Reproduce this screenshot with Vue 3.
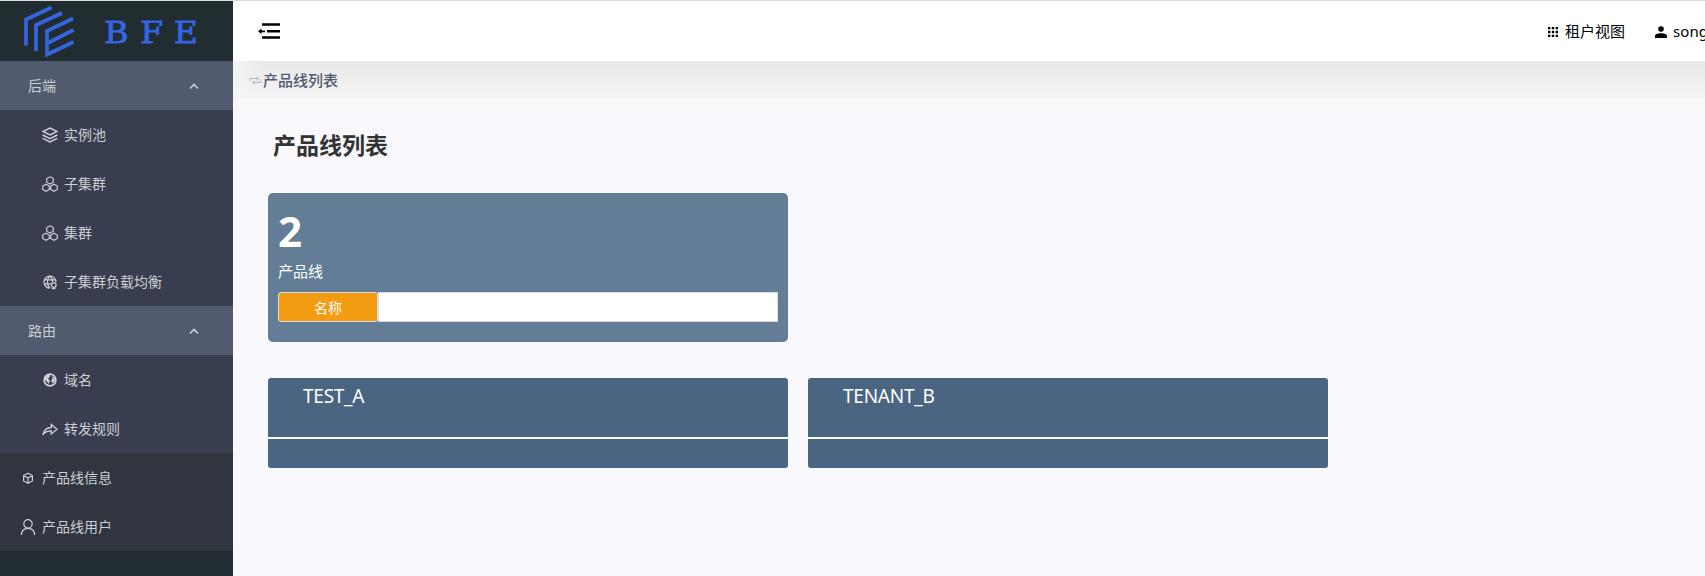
<script setup>
const backend = [
  { label: '实例池', icon: 'layers' },
  { label: '子集群', icon: 'cluster' },
  { label: '集群', icon: 'cluster' },
  { label: '子集群负载均衡', icon: 'globe' },
]
const routes = [
  { label: '域名', icon: 'earth' },
  { label: '转发规则', icon: 'share' },
]
const groups = [
  { title: '后端', items: backend },
  { title: '路由', items: routes },
]
const products = ['TEST_A', 'TENANT_B']
</script>

<template>
  <div class="page">
    <aside class="sidebar">
      <div class="logo">
        <svg width="233" height="60" viewBox="0 1 233 60">
          <g fill="none" stroke="#3565e0" stroke-width="3.7" stroke-linejoin="miter">
            <path d="M26 45.500V19.500L51.500 7.500" />
            <path d="M36 51V25L62 13" />
            <path d="M73 18.500L47 31V54.500L73.500 42" />
            <path d="M48 43L73.500 30" />
          </g>
          <text class="brand" transform="scale(1.14 1)" y="43.500" x="91.500 123 152.500">BFE</text>
        </svg>
      </div>
      <nav>
        <template v-for="g in groups" :key="g.title">
          <div class="group-title">
            <span>{{ g.title }}</span>
            <svg class="chevron" width="10" height="7" viewBox="0 0 10 7"><path d="M1 5.500L5 1.500L9 5.500" fill="none" stroke="currentColor" stroke-width="1.600" /></svg>
          </div>
          <div v-for="it in g.items" :key="it.label" class="item">
            <svg class="icon" width="16" height="16" viewBox="0 0 16 16" fill="none" stroke="currentColor">
              <g v-if="it.icon === 'layers'" stroke-width="1.500">
                <path d="M8 1L15 4.500L8 8L1 4.500Z" />
                <path d="M.7 8L8 11.600L15.300 8M.7 11.300L8 15L15.300 11.300" />
              </g>
              <g v-else-if="it.icon === 'cluster'" stroke-width="1.200">
                <path d="M8 .8L11.300 2.500V6.200L8 8L4.700 6.200V2.500Z" />
                <path d="M4 8.200L7.300 10V13.500L4 15.300L.7 13.500V10Z" />
                <path d="M12 8.200L15.300 10V13.500L12 15.300L8.700 13.500V10Z" />
              </g>
              <g v-else-if="it.icon === 'globe'" stroke-width="1.200">
                <path d="M14 8A6 6 0 1 0 8 14.200M8 2C4.500 5 4.500 11 8 14M8 2C10 4 10.700 6 10.600 8M2.500 5.800H13.500M2 9.800H9" />
                <circle cx="11.800" cy="11" r="2.300" />
                <path d="M11.800 13.300V15M10 14.600H13.500" />
              </g>
              <g v-else-if="it.icon === 'earth'">
                <circle cx="8" cy="8" r="5.900" stroke-width="1.700" />
                <path d="M3 5L6 2.500H8.500L8 4.500L6 6.500L7.800 8.500L7 12L5.200 10L3 8ZM10 4.500L12.500 5.500L13 9L10.500 11.500L9 8.500L10.500 7Z" fill="currentColor" stroke="none" />
              </g>
              <path v-else d="M.8 13.800C2 9 5 6.700 9.300 6.500V3.400L15 8.200L9.300 12.900V9.900C5.800 9.800 3 11 .8 13.800Z" stroke-width="1.300" />
            </svg>
            <span>{{ it.label }}</span>
          </div>
        </template>
        <div class="item root">
          <svg class="icon" width="16" height="16" viewBox="0 0 16 16" fill="none" stroke="currentColor" stroke-width="1.200">
            <path d="M8 3.200L12.400 5.500V11L8 13.400L3.600 11V5.500ZM3.600 5.500L8 8L12.400 5.500M8 8V13.400" />
          </svg>
          <span>产品线信息</span>
        </div>
        <div class="item root">
          <svg class="icon" width="16" height="16" viewBox="0 0 16 16" fill="none" stroke="currentColor" stroke-width="1.200">
            <circle cx="8" cy="4.800" r="4.200" />
            <path d="M1.300 16C1.600 11.700 4 9.400 8 9.400S14.400 11.700 14.700 16" />
          </svg>
          <span>产品线用户</span>
        </div>
      </nav>
    </aside>

    <div class="body">
      <header class="header">
        <svg width="22" height="17" viewBox="0 0 22 17">
          <path d="M4 1.500H22M9 8.300H22M4 14.500H22" stroke="#000" stroke-width="2.600" />
          <path d="M0 8.300L3.500 5.500V7.400H7V9.200H3.500V11.100Z" />
        </svg>
        <div class="user-bar">
          <svg class="grid-icon" width="10" height="10" viewBox="0 0 10 10">
            <path d="M0 1.200H10M0 5H10M0 8.800H10" stroke="#000" stroke-width="2.300" stroke-dasharray="2.400 1.400" />
          </svg>
          <span class="tenant">租户视图</span>
          <svg class="user-icon" width="12" height="12" viewBox="0 0 12 12">
            <circle cx="6" cy="3" r="2.800" />
            <path d="M0 12V10C0 8 3 7.200 6 7.200S12 8 12 10V12Z" />
          </svg>
          <span class="user-name">song</span>
        </div>
      </header>
      <div class="crumb">
        <svg width="13" height="9" viewBox="0 0 13 9" fill="none" stroke="#b4b7bd" stroke-width="1">
          <path d="M1 5V2.500H9M7.500 .8L9.500 2.500L7.500 4.200M12 3.500V6.500H4M5.500 4.800L3.500 6.500L5.500 8.200" />
        </svg>
        <span>产品线列表</span>
      </div>
      <main class="content">
        <h1>产品线列表</h1>
        <section class="summary">
          <div class="count">2</div>
          <div class="caption">产品线</div>
          <div class="search">
            <span class="search-label">名称</span>
            <input class="search-input" type="text" />
          </div>
        </section>
        <div class="cards">
          <div v-for="p in products" :key="p" class="card">
            <div class="card-name">{{ p }}</div>
            <div class="card-foot"></div>
          </div>
        </div>
      </main>
    </div>
  </div>
</template>

<style>
body {
  overflow: hidden;
}
</style>

<style scoped>
.page {
  display: flex;
  width: 100%;
  height: 576px;
  box-sizing: border-box;
  border-top: 1px solid #d9dade;
  overflow: hidden;
  background: #f8f8fd;
  font-family: "Noto Sans", "Noto Sans CJK SC", sans-serif;
  font-size: 14px;
}
.sidebar {
  width: 233px;
  flex: none;
  background: #222d32;
  color: #cdcfd3;
}
.logo {
  height: 60px;
}
.logo svg {
  display: block;
}
.brand {
  font-family: "DejaVu Serif", serif;
  font-size: 29px;
  fill: #3565e0;
  stroke: #3565e0;
  stroke-width: 0.8px;
}
.group-title {
  height: 49px;
  display: flex;
  align-items: center;
  justify-content: space-between;
  box-sizing: border-box;
  padding: 0 34px 2px 28px;
  background: #515a6e;
}
.chevron {
  margin-top: 4px;
}
.item {
  height: 49px;
  display: flex;
  align-items: center;
  gap: 6px;
  box-sizing: border-box;
  padding: 0 0 2px 42px;
  background: #383e4f;
}
.item .icon {
  margin-top: 3px;
}
.root {
  padding-left: 20px;
  background: #31353f;
}
.body {
  flex: 1;
  min-width: 0;
}
.header {
  height: 60px;
  display: flex;
  align-items: center;
  justify-content: space-between;
  background: #fff;
  padding-left: 25px;
  font-size: 15px;
  color: #000;
}
.user-bar {
  width: 157px;
  display: flex;
  align-items: center;
  padding-bottom: 1px;
  box-sizing: border-box;
  white-space: nowrap;
}
.user-bar svg {
  flex: none;
}
.grid-icon {
  margin: 3px 7px 0 0;
}
.tenant {
  margin-right: 30px;
}
.user-icon {
  margin: 3px 6px 0 0;
}
.user-name {
  letter-spacing: 0.1px;
}
.crumb {
  height: 38px;
  display: flex;
  align-items: center;
  box-sizing: border-box;
  padding: 0 0 2px 16px;
  background: linear-gradient(90deg, rgba(245, 245, 245, .8), rgba(245, 245, 245, 0) 30px), linear-gradient(#e9e9e9, #f4f4f4);
  font-size: 15px;
  font-weight: 500;
  color: #515a6e;
}
.crumb svg {
  margin: 3px 1px 0 0;
}
.content {
  padding: 28px 35px 0;
}
h1 {
  margin: 0 0 0 5px;
  height: 66px;
  font-size: 23px;
  line-height: 36px;
  font-weight: 700;
  color: #333;
}
.summary {
  width: 520px;
  height: 149px;
  box-sizing: border-box;
  padding: 10px;
  border-radius: 5px;
  background: #637d96;
  color: #fff;
}
.count {
  height: 55px;
  font-size: 42px;
  line-height: 55px;
  font-weight: 700;
}
.caption {
  height: 34px;
  font-size: 15px;
  line-height: 26px;
}
.search {
  display: flex;
  height: 30px;
}
.search-label {
  width: 100px;
  box-sizing: border-box;
  border: 1px solid #dcdee2;
  border-radius: 3px;
  background: #f39c12;
  line-height: 30px;
  text-align: center;
}
.search-input {
  flex: 1;
  min-width: 0;
  padding: 0 8px;
  border: 1px solid #d9dce3;
  background: #fff;
  outline: none;
}
.cards {
  display: flex;
  gap: 20px;
  margin-top: 36px;
}
.card {
  width: 520px;
  height: 90px;
  border-radius: 3px;
  overflow: hidden;
  background: #4a6582;
  color: #fff;
}
.card-name {
  height: 59px;
  box-sizing: border-box;
  padding: 4px 35px 0;
  font-size: 19px;
  line-height: 28px;
  letter-spacing: -0.25px;
}
.card-foot {
  height: 29px;
  border-top: 2px solid #fff;
}
</style>
